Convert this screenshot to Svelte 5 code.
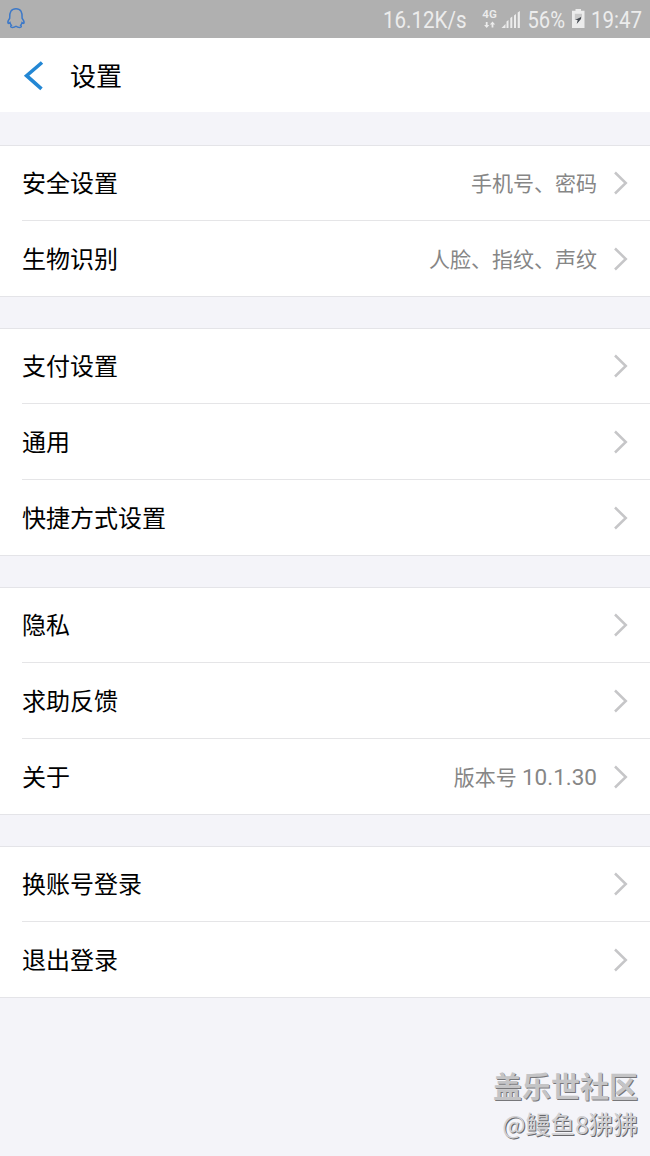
<script>
  const groups = [
    [
      { label: '安全设置', detail: '手机号、密码' },
      { label: '生物识别', detail: '人脸、指纹、声纹' }
    ],
    [{ label: '支付设置' }, { label: '通用' }, { label: '快捷方式设置' }],
    [{ label: '隐私' }, { label: '求助反馈' }, { label: '关于', detail: '版本号', version: '10.1.30' }],
    [{ label: '换账号登录' }, { label: '退出登录' }]
  ];
</script>

<div class="screen">
  <header class="status">
    <svg class="qq" width="20" height="24" viewBox="0 0 20 24">
      <path d="M3.700 12.200C3.200 6.200 5.400 2.700 10 2.700s6.600 3.500 6.100 9.500c1.200 1.600 2.200 3.300 2 4.700-.2.800-1.300.5-2.100-.3-.3 1.200-.8 2-1.400 2.800 1.300.8.900 2-1 2-1.500 0-2.500-.2-3.100-1h-1c-.6.800-1.600 1-3.100 1-1.900 0-2.300-1.200-1-2-.6-.8-1.100-1.600-1.400-2.800-.8.800-1.900 1.100-2.100.3-.2-1.400.6-3.100 1.800-4.700z" />
    </svg>
    <svg class="indicators" width="270" height="38" viewBox="380 0 270 38">
      <g class="status-text">
        <text x="383" y="28" textLength="83.5" lengthAdjust="spacingAndGlyphs">16.12K/s</text>
        <text x="527.5" y="28" textLength="37.500" lengthAdjust="spacingAndGlyphs">56%</text>
        <text x="591" y="28" textLength="51" lengthAdjust="spacingAndGlyphs">19:47</text>
      </g>
      <text class="network" x="482.300" y="18" textLength="14.500" lengthAdjust="spacingAndGlyphs">4G</text>
      <g fill="#ececec">
        <path d="M485.800 22h1.800v3h1.700l-2.600 3-2.600-3h1.700z" />
        <path d="M491.600 27.500v-3h-1.700l2.600-3 2.600 3h-1.700v3z" />
        <path d="M501.500 28l4-4v4zM506.500 28v-6.500l2-1.500v8zM510.300 28v-10l2-1.500v11.500zM514 28v-12.500l2-1.500v14zM517.700 28v-15.500l2.200-1.500v17z" />
        <path d="M575.500 9h5.500v1.800h3.500V28h-12.500V10.800h3.500z" />
      </g>
      <path d="M574.800 13.800h7.200v4.500l-7.200 1.700z" fill="#c9c9c9" />
      <path d="M581 17l-6 3h2.700l-1 4 4.300-5z" fill="#444950" />
    </svg>
  </header>
  <nav class="titlebar">
    <svg class="back" width="22" height="30" viewBox="0 0 22 30">
      <path d="M20 1.500L4.600 14.700l14.900 13.200" />
    </svg>
    <h1>设置</h1>
  </nav>
  <main>
    {#each groups as group}
      <section>
        {#each group as item}
          <div class="row">
            <div class="content">
              <span class="label">{item.label}</span>
              {#if item.detail}
                <span class="detail">{item.detail}{#if item.version}&nbsp;<span class="version">{item.version}</span>{/if}</span>
              {/if}
              <svg class="chevron" width="16" height="26" viewBox="0 0 16 26">
                <path d="M2 2.500L12.800 13 2 23.500" />
              </svg>
            </div>
          </div>
        {/each}
      </section>
    {/each}
  </main>
  <div class="watermark">
    <div class="community">盖乐世社区</div>
    <div class="author">@鳗鱼8狒狒</div>
  </div>
</div>

<style>
  :global(body) { margin: 0; }
  .screen {
    position: relative;
    width: 650px;
    height: 1156px;
    overflow: hidden;
    background: #f4f4f9;
    font-family: Roboto, "Noto Sans CJK SC", sans-serif;
  }
  .status {
    display: flex;
    justify-content: space-between;
    height: 38px;
    background: #b0b0b0;
  }
  .qq { margin: 6px 0 0 6px; fill: none; stroke: #3d79c8; stroke-width: 1.5; }
  .status-text { font-size: 23px; fill: #ececec; font-weight: 400; }
  .network { font-size: 11.5px; font-weight: 600; fill: #ececec; }
  .titlebar {
    display: flex;
    align-items: center;
    height: 74px;
    background: #fff;
  }
  .back { margin: 2px 0 0 22px; fill: none; stroke: #2387d4; stroke-width: 3.6; }
  h1 {
    margin: 4px 0 0 26px;
    font-size: 26px;
    line-height: 38px;
    font-weight: 400;
    color: #000;
  }
  main {
    display: flex;
    flex-direction: column;
    gap: 31px;
    padding-top: 33px;
  }
  section {
    border-top: 1px solid #e4e4e8;
    border-bottom: 1px solid #e4e4e8;
    background: #fff;
  }
  .row { padding-left: 22px; }
  .content {
    display: flex;
    align-items: center;
    box-sizing: border-box;
    height: 76px;
    padding-right: 21px;
    border-bottom: 1px solid #e5e5e7;
  }
  .row:first-child .content { height: 75px; }
  .row:last-child .content { height: 75px; border-bottom: 0; }
  .label { flex: 1; padding-top: 2px; font-size: 24px; line-height: 36px; color: #000; }
  .detail { padding-top: 2px; font-size: 21px; line-height: 32px; color: #868686; }
  .version { font-size: 22.5px; line-height: 1; }
  .chevron { margin-left: 16px; fill: none; stroke: #c6c6c8; stroke-width: 2.5; }
  .watermark {
    position: absolute;
    right: 12px;
    bottom: 14px;
    display: flex;
    flex-direction: column;
    align-items: flex-end;
    color: #c4c4c6;
    font-family: "Noto Sans CJK SC", sans-serif;
  }
  .community { font-size: 29px; line-height: 40px; font-weight: 700; text-shadow: 1px 1px 0 #77777a; }
  .author { font-size: 24.700px; line-height: 37px; font-weight: 400; color: #d0d0d3; text-shadow: 1px 1px 0 #68686c; }
</style>
